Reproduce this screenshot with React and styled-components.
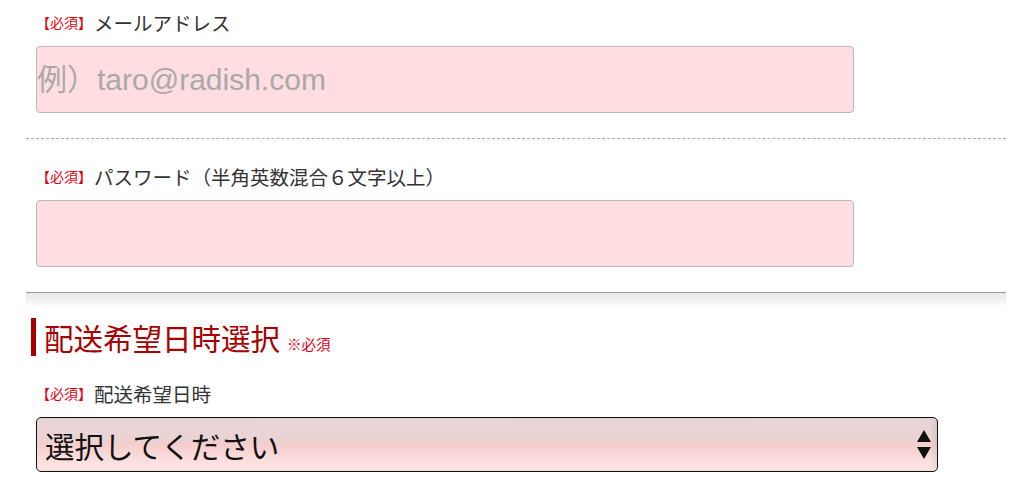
import React from "react";
import styled, { createGlobalStyle } from "styled-components";

const GlobalStyle = createGlobalStyle`
  body {
    margin: 0;
    background: #fff;
    font-family: "Noto Sans CJK JP", "Liberation Sans", sans-serif;
    color: #333;
  }
`;

const Form = styled.div`
  width: 980px;
  margin-left: 26px;
`;

const Field = styled.div`
  padding: ${(p) => p.$top}px 0 ${(p) => p.$bottom}px 10px;
  border-bottom: ${(p) => (p.$dashed ? "1px dashed #aaa" : "none")};
`;

const Label = styled.div`
  display: flex;
  align-items: center;
  height: 24px;
  margin-bottom: 12px;
  font-size: 19.5px;
  color: #333;
`;

const Required = styled.span`
  font-size: 14px;
  color: #e60012;
  margin-right: 2px;
`;

const Input = styled.input`
  display: block;
  box-sizing: border-box;
  width: 818px;
  height: 67px;
  margin: 0;
  padding: 0;
  border: 1px solid #bbb;
  border-radius: 4px;
  background: #ffdde0;
  font-family: "Liberation Sans", "Noto Sans CJK JP", sans-serif;
  font-size: 30px;
  color: #333;
  outline: none;
  &::placeholder {
    color: #a9a9a9;
  }
`;

const Divider = styled.div`
  border-top: 1px solid #999;
  height: 12px;
  background: linear-gradient(#e8e8e8, #f9f9f9);
`;

const Heading = styled.h2`
  display: flex;
  align-items: baseline;
  margin: 13px 0 0 5px;
  padding-left: 8px;
  height: 38px;
  line-height: 38px;
  border-left: 5px solid #a80000;
  font-size: 29.5px;
  font-weight: normal;
  color: #a80000;
`;

const HeadingNote = styled.span`
  margin-left: 7px;
  font-size: 14.5px;
  color: #e60012;
`;

const SelectWrap = styled.div`
  position: relative;
  width: 902px;
  height: 55px;
`;

const Select = styled.select`
  box-sizing: border-box;
  width: 100%;
  height: 100%;
  margin: 0;
  padding: 0 0 0 8px;
  appearance: none;
  border: 1px solid #111;
  border-radius: 5px;
  background: linear-gradient(#e9d6d6 0%, #ead3d3 42%, #f4cccc 48%, #fbdcdc 75%, #ffe5e5 100%);
  box-shadow: inset -4px 0 4px rgba(0, 0, 0, 0.06);
  font-family: "Noto Sans CJK JP", sans-serif;
  font-size: 29.5px;
  color: #111;
  outline: none;
`;

const Arrows = styled.svg`
  position: absolute;
  right: 7px;
  top: 13px;
  pointer-events: none;
`;

export default function App() {
  return (
    <>
      <GlobalStyle />
      <Form>
        <Field $top={10} $bottom={25} $dashed>
          <Label>
            <Required>【必須】</Required>メールアドレス
          </Label>
          <Input placeholder="例）taro@radish.com" />
        </Field>
        <Field $top={25} $bottom={25}>
          <Label>
            <Required>【必須】</Required>パスワード（半角英数混合６文字以上）
          </Label>
          <Input type="password" />
        </Field>
        <Divider />
        <Heading>
          配送希望日時選択<HeadingNote>※必須</HeadingNote>
        </Heading>
        <Field $top={25} $bottom={0}>
          <Label>
            <Required>【必須】</Required>配送希望日時
          </Label>
          <SelectWrap>
            <Select defaultValue="">
              <option value="">選択してください</option>
            </Select>
            <Arrows width="14" height="30" viewBox="0 0 14 30">
              <path d="M7 0 L14 12 L0 12 Z" fill="#111" />
              <path d="M0 17 L14 17 L7 29 Z" fill="#111" />
            </Arrows>
          </SelectWrap>
        </Field>
      </Form>
    </>
  );
}
